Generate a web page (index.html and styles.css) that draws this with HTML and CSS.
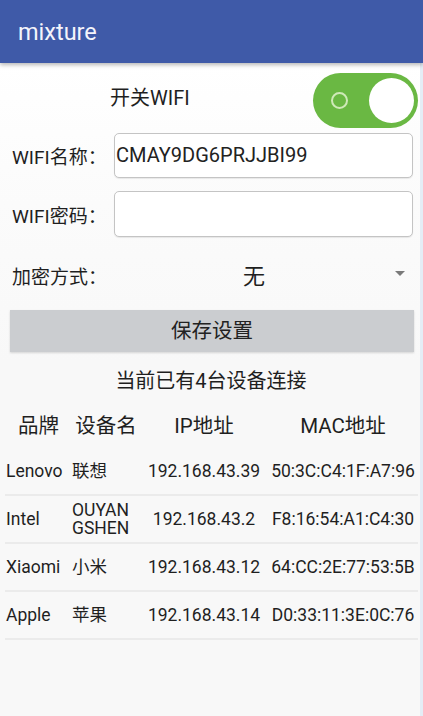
FILE: index.html
```html
<!DOCTYPE html>
<html lang="zh">
<head>
<meta charset="utf-8">
<title>mixture</title>
<link rel="stylesheet" href="styles.css">
</head>
<body>
<div class="app">
  <header class="appbar">mixture</header>
  <main class="content">
    <div class="toggle-row">
      <span class="toggle-label">开关WIFI</span>
      <div class="switch">
        <span class="switch-ring"></span>
        <span class="switch-knob"></span>
      </div>
    </div>
    <div class="field">
      <span class="field-label">WIFI名称：</span>
      <div class="input">CMAY9DG6PRJJBI99</div>
    </div>
    <div class="field field-pw">
      <span class="field-label">WIFI密码：</span>
      <div class="input input-pw"></div>
    </div>
    <div class="spinner-row">
      <span class="field-label">加密方式：</span>
      <div class="spinner">
        <span class="spinner-value">无</span>
        <span class="spinner-arrow"></span>
      </div>
    </div>
    <div class="save-btn">保存设置</div>
    <div class="count">当前已有4台设备连接</div>
    <div class="table">
      <div class="trow thead">
        <div class="c1">品牌</div>
        <div class="c2">设备名</div>
        <div class="c3">IP地址</div>
        <div class="c4">MAC地址</div>
      </div>
      <div class="trow tbody">
        <div class="c1">Lenovo</div>
        <div class="c2">联想</div>
        <div class="c3">192.168.43.39</div>
        <div class="c4">50:3C:C4:1F:A7:96</div>
      </div>
      <div class="trow tbody">
        <div class="c1">Intel</div>
        <div class="c2 wrap">OUYANGSHEN</div>
        <div class="c3">192.168.43.2</div>
        <div class="c4">F8:16:54:A1:C4:30</div>
      </div>
      <div class="trow tbody">
        <div class="c1">Xiaomi</div>
        <div class="c2">小米</div>
        <div class="c3">192.168.43.12</div>
        <div class="c4">64:CC:2E:77:53:5B</div>
      </div>
      <div class="trow tbody">
        <div class="c1">Apple</div>
        <div class="c2">苹果</div>
        <div class="c3">192.168.43.14</div>
        <div class="c4">D0:33:11:3E:0C:76</div>
      </div>
    </div>
  </main>
</div>
</body>
</html>
```
FILE: styles.css
```css
html, body {
  margin: 0;
  padding: 0;
}
body {
  font-family: Roboto, "Noto Sans CJK SC", sans-serif;
  color: #1f1f1f;
  background: #f8f8f8;
}
.app {
  width: 423px;
  height: 716px;
  display: flex;
  flex-direction: column;
  overflow: hidden;
}
.appbar {
  height: 63px;
  flex: none;
  background: #3f5aa8;
  color: #f4f4fb;
  font-size: 23.5px;
  line-height: 64px;
  padding-left: 18px;
  box-shadow: 0 2px 4px rgba(0, 0, 0, 0.28);
  position: relative;
  z-index: 1;
}
.content {
  flex: 1;
  background: linear-gradient(#ffffff 0, #fbfbfb 140px, #f8f8f8 300px);
  border-right: 3px solid #e4edf6;
}
.toggle-row {
  height: 59px;
  padding: 8px 2px 0 110px;
  display: flex;
  align-items: center;
  justify-content: space-between;
}
.toggle-label {
  font-size: 20px;
  margin-top: -8px;
}
.switch {
  width: 105px;
  height: 55px;
  border-radius: 28px;
  background: #6ab843;
  display: flex;
  align-items: center;
  justify-content: space-between;
  padding: 0 4px 0 18px;
  box-sizing: border-box;
}
.switch-ring {
  width: 13px;
  height: 13px;
  border: 2px solid #cfe9b8;
  border-radius: 50%;
}
.switch-knob {
  width: 45px;
  height: 45px;
  border-radius: 50%;
  background: #ffffff;
}
.field {
  display: flex;
  align-items: center;
  padding: 3px 7px 0 12px;
}
.field-pw {
  padding-top: 13px;
}
.field-label {
  font-size: 19px;
  width: 102px;
  flex: none;
  white-space: nowrap;
}
.input {
  flex: 1;
  height: 45px;
  box-sizing: border-box;
  border: 1px solid #c4c4c4;
  border-radius: 5px;
  background: #ffffff;
  box-shadow: 0 1px 1px rgba(0, 0, 0, 0.08);
  font-size: 20px;
  line-height: 43px;
  padding-left: 1px;
  color: #222;
}
.input-pw {
  height: 46px;
}
.spinner-row {
  display: flex;
  align-items: center;
  height: 70px;
  margin-top: 3px;
  padding: 0 14px 0 12px;
}
.spinner {
  flex: 1;
  display: flex;
  align-items: center;
  justify-content: center;
  position: relative;
  padding-right: 18px;
  margin-top: -3px;
}
.spinner-value {
  font-size: 22px;
  margin-left: 6px;
}
.spinner-arrow {
  position: absolute;
  right: 1px;
  top: 50%;
  margin-top: -3px;
  width: 0;
  height: 0;
  border-left: 5px solid transparent;
  border-right: 5px solid transparent;
  border-top: 5px solid #7a7a7a;
}
.save-btn {
  margin: 0 6px 0 10px;
  height: 42px;
  background: #cbcdd0;
  box-shadow: 0 1px 2px rgba(0, 0, 0, 0.15);
  text-align: center;
  line-height: 42px;
  font-size: 20.5px;
  color: #222;
}
.count {
  margin-top: 10px;
  height: 38px;
  line-height: 38px;
  text-align: center;
  font-size: 20px;
  padding-left: 2px;
}
.table {
  margin: 0 2px 0 5px;
}
.trow {
  display: grid;
  grid-template-columns: 67px 68px 128px 150px;
  align-items: center;
}
.thead {
  height: 48px;
  font-size: 20.5px;
}
.thead > div {
  text-align: center;
}
.tbody {
  height: 46px;
  border-bottom: 2px solid #ebebeb;
  font-size: 17.5px;
  line-height: 18px;
}
.tbody .c1 {
  padding-left: 1px;
  white-space: nowrap;
}
.tbody .c3,
.tbody .c4 {
  text-align: center;
  white-space: nowrap;
}
.wrap {
  width: 64px;
  word-break: break-all;
}
```
